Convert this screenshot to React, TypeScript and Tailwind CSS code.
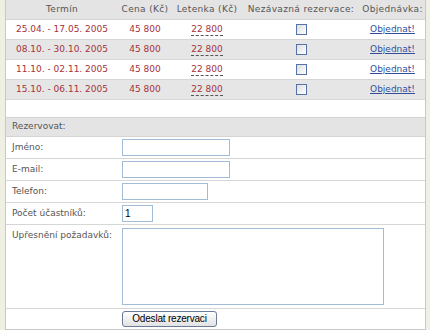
import React from "react";

const terms = [
  { range: "25.04. - 17.05. 2005", gray: false },
  { range: "08.10. - 30.10. 2005", gray: true },
  { range: "11.10. - 02.11. 2005", gray: false },
  { range: "15.10. - 06.11. 2005", gray: true },
];

const cols = "grid grid-cols-[112px_54px_70px_118px_65px]";

const FormRow = ({ label, children, tall }: { label: string; children: React.ReactNode; tall?: boolean }) => (
  <div
    className={`grid grid-cols-[116px_1fr] border-b border-[#d6d6d6] ${
      tall ? "h-[84px] items-start pt-[3px]" : "h-[22px] items-center"
    }`}
  >
    <div className={`pl-[6px] text-[#555] ${tall ? "pt-[1px]" : ""}`}>{label}</div>
    <div className="flex">{children}</div>
  </div>
);

export default function App() {
  return (
    <div className="w-[430px] h-[330px] bg-[#efefe3] flex font-['DejaVu_Sans',sans-serif] text-[9px] overflow-hidden">
      <div className="ml-[5px] w-[421px] border-x border-[#c9c9c2] bg-white flex flex-col">
        {/* terms table */}
        <div className={`${cols} h-[20px] items-center bg-[#e4e4e4] border-b border-[#d4d4d4] text-[#555] tracking-[0.35px] text-center`}>
          <div>Termín</div>
          <div>Cena (Kč)</div>
          <div>Letenka (Kč)</div>
          <div>Nezávazná rezervace:</div>
          <div>Objednávka:</div>
        </div>
        {terms.map((t) => (
          <div
            key={t.range}
            className={`${cols} h-[20px] items-center border-b border-[#d6d6d6] text-center text-[#a5333d] ${
              t.gray ? "bg-[#e6e6e6]" : "bg-white"
            }`}
          >
            <div>{t.range}</div>
            <div>45 800</div>
            <div>
              <span className="border-b border-dashed border-[#555] leading-[11px] inline-block">22 800</span>
            </div>
            <div className="flex justify-center">
              <span className="w-[11px] h-[11px] border border-[#5573a8] bg-gradient-to-br from-[#dedede] to-white" />
            </div>
            <div>
              <a href="#" className="text-[#2f4f9d] underline">
                Objednat!
              </a>
            </div>
          </div>
        ))}
        <div className="h-[17px]" />

        {/* reservation form */}
        <div className="h-[20px] flex items-center pl-[6px] bg-[#e4e4e4] border-y border-[#d4d4d4] text-[#555]">
          Rezervovat:
        </div>
        <FormRow label="Jméno:">
          <input className="w-[108px] h-[17px] border border-[#a3bcd6] outline-none" />
        </FormRow>
        <FormRow label="E-mail:">
          <input className="w-[108px] h-[17px] border border-[#a3bcd6] outline-none" />
        </FormRow>
        <FormRow label="Telefon:">
          <input className="w-[86px] h-[17px] border border-[#a3bcd6] outline-none" />
        </FormRow>
        <FormRow label="Počet účastníků:">
          <input
            defaultValue="1"
            className="w-[31px] h-[17px] border border-[#a3bcd6] outline-none px-[2px] text-[10px] font-['Liberation_Sans',sans-serif] text-black"
          />
        </FormRow>
        <FormRow label="Upřesnění požadavků:" tall>
          <textarea className="w-[262px] h-[77px] border border-[#a3bcd6] outline-none resize-none" />
        </FormRow>
        <div className="grid grid-cols-[116px_1fr] h-[21px] items-center border-b border-[#c9c9c9]">
          <div />
          <div>
            <button className="w-[95px] h-[16px] rounded-[3px] border border-[#6b7a96] bg-gradient-to-b from-white to-[#e2e2e2] text-[10px] leading-none text-black font-['Liberation_Sans',sans-serif] tracking-[-0.2px]">
              Odeslat rezervaci
            </button>
          </div>
        </div>
        <div className="flex-1 bg-white" />
      </div>
    </div>
  );
}
